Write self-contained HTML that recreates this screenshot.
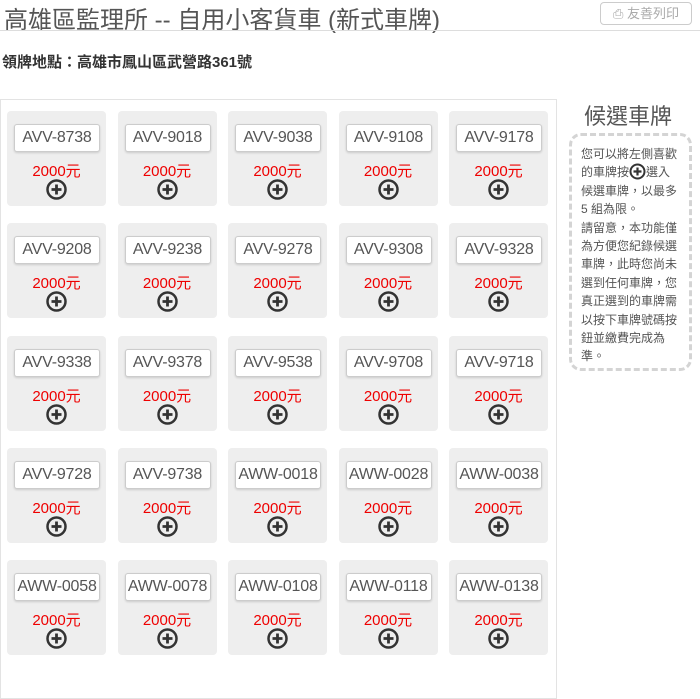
<!DOCTYPE html>
<html><head><meta charset="utf-8"><style>
*{margin:0;padding:0;box-sizing:border-box}
body{width:700px;height:654px;overflow:hidden;background:#fff;font-family:"Liberation Sans","Noto Sans CJK TC",sans-serif;position:relative}
h1{position:absolute;left:4px;top:0px;font-size:24px;font-weight:normal;color:#555;white-space:nowrap}
.hr{position:absolute;left:0;top:30px;width:700px;border-top:1px solid #ddd}
.btn{position:absolute;left:600px;top:2px;width:92px;height:23px;border:1px solid #ccc;border-radius:4px;font-size:13px;color:#aaa;text-align:center;line-height:21px}
.loc{position:absolute;left:2px;top:51px;font-size:15px;color:#333;font-weight:bold}
.box{position:absolute;left:0;top:99px;width:557px;height:600px;border:1px solid #e3e3e3}
.grid{position:absolute;left:7px;top:111px;display:grid;grid-template-columns:repeat(5,99px);column-gap:11.5px;grid-auto-rows:95px;row-gap:17.25px}
.c{background:#eee;border-radius:4px;position:relative}
.p{position:absolute;left:7px;top:13px;width:86px;height:28px;background:#fff;border:1px solid #ccc;border-radius:3px;box-shadow:0 1px 2px rgba(0,0,0,.15);font-size:16px;color:#555;text-align:center;line-height:26px;white-space:nowrap;letter-spacing:-.2px}
.pr{position:absolute;left:0;width:99px;top:49px;text-align:center;color:#e00;font-size:15px}
.pl{position:absolute;left:39px;top:68px}
.st{position:absolute;left:584px;top:99px;font-size:22px;color:#555}
.side{position:absolute;left:569px;top:133px;width:123px;height:238px;border:3px dashed #d4d4d4;border-radius:12px;padding:9px 8px 0 9px;font-size:12px;line-height:18.4px;color:#555}
</style></head><body>
<h1>高雄區監理所 -- 自用小客貨車 (新式車牌)</h1>
<div class="hr"></div>
<div class="btn">⎙ 友善列印</div>
<div class="loc">領牌地點：高雄市鳳山區武營路361號</div>
<div class="box"></div>
<div class="grid">
<div class="c"><div class="p">AVV-8738</div><div class="pr">2000元</div><svg class="pl" width="21" height="21"><circle cx="10.5" cy="10.5" r="9" fill="none" stroke="#333" stroke-width="2.5"/><path d="M10.5 5.5v10M5.5 10.5h10" stroke="#333" stroke-width="2.8"/></svg></div>
<div class="c"><div class="p">AVV-9018</div><div class="pr">2000元</div><svg class="pl" width="21" height="21"><circle cx="10.5" cy="10.5" r="9" fill="none" stroke="#333" stroke-width="2.5"/><path d="M10.5 5.5v10M5.5 10.5h10" stroke="#333" stroke-width="2.8"/></svg></div>
<div class="c"><div class="p">AVV-9038</div><div class="pr">2000元</div><svg class="pl" width="21" height="21"><circle cx="10.5" cy="10.5" r="9" fill="none" stroke="#333" stroke-width="2.5"/><path d="M10.5 5.5v10M5.5 10.5h10" stroke="#333" stroke-width="2.8"/></svg></div>
<div class="c"><div class="p">AVV-9108</div><div class="pr">2000元</div><svg class="pl" width="21" height="21"><circle cx="10.5" cy="10.5" r="9" fill="none" stroke="#333" stroke-width="2.5"/><path d="M10.5 5.5v10M5.5 10.5h10" stroke="#333" stroke-width="2.8"/></svg></div>
<div class="c"><div class="p">AVV-9178</div><div class="pr">2000元</div><svg class="pl" width="21" height="21"><circle cx="10.5" cy="10.5" r="9" fill="none" stroke="#333" stroke-width="2.5"/><path d="M10.5 5.5v10M5.5 10.5h10" stroke="#333" stroke-width="2.8"/></svg></div>
<div class="c"><div class="p">AVV-9208</div><div class="pr">2000元</div><svg class="pl" width="21" height="21"><circle cx="10.5" cy="10.5" r="9" fill="none" stroke="#333" stroke-width="2.5"/><path d="M10.5 5.5v10M5.5 10.5h10" stroke="#333" stroke-width="2.8"/></svg></div>
<div class="c"><div class="p">AVV-9238</div><div class="pr">2000元</div><svg class="pl" width="21" height="21"><circle cx="10.5" cy="10.5" r="9" fill="none" stroke="#333" stroke-width="2.5"/><path d="M10.5 5.5v10M5.5 10.5h10" stroke="#333" stroke-width="2.8"/></svg></div>
<div class="c"><div class="p">AVV-9278</div><div class="pr">2000元</div><svg class="pl" width="21" height="21"><circle cx="10.5" cy="10.5" r="9" fill="none" stroke="#333" stroke-width="2.5"/><path d="M10.5 5.5v10M5.5 10.5h10" stroke="#333" stroke-width="2.8"/></svg></div>
<div class="c"><div class="p">AVV-9308</div><div class="pr">2000元</div><svg class="pl" width="21" height="21"><circle cx="10.5" cy="10.5" r="9" fill="none" stroke="#333" stroke-width="2.5"/><path d="M10.5 5.5v10M5.5 10.5h10" stroke="#333" stroke-width="2.8"/></svg></div>
<div class="c"><div class="p">AVV-9328</div><div class="pr">2000元</div><svg class="pl" width="21" height="21"><circle cx="10.5" cy="10.5" r="9" fill="none" stroke="#333" stroke-width="2.5"/><path d="M10.5 5.5v10M5.5 10.5h10" stroke="#333" stroke-width="2.8"/></svg></div>
<div class="c"><div class="p">AVV-9338</div><div class="pr">2000元</div><svg class="pl" width="21" height="21"><circle cx="10.5" cy="10.5" r="9" fill="none" stroke="#333" stroke-width="2.5"/><path d="M10.5 5.5v10M5.5 10.5h10" stroke="#333" stroke-width="2.8"/></svg></div>
<div class="c"><div class="p">AVV-9378</div><div class="pr">2000元</div><svg class="pl" width="21" height="21"><circle cx="10.5" cy="10.5" r="9" fill="none" stroke="#333" stroke-width="2.5"/><path d="M10.5 5.5v10M5.5 10.5h10" stroke="#333" stroke-width="2.8"/></svg></div>
<div class="c"><div class="p">AVV-9538</div><div class="pr">2000元</div><svg class="pl" width="21" height="21"><circle cx="10.5" cy="10.5" r="9" fill="none" stroke="#333" stroke-width="2.5"/><path d="M10.5 5.5v10M5.5 10.5h10" stroke="#333" stroke-width="2.8"/></svg></div>
<div class="c"><div class="p">AVV-9708</div><div class="pr">2000元</div><svg class="pl" width="21" height="21"><circle cx="10.5" cy="10.5" r="9" fill="none" stroke="#333" stroke-width="2.5"/><path d="M10.5 5.5v10M5.5 10.5h10" stroke="#333" stroke-width="2.8"/></svg></div>
<div class="c"><div class="p">AVV-9718</div><div class="pr">2000元</div><svg class="pl" width="21" height="21"><circle cx="10.5" cy="10.5" r="9" fill="none" stroke="#333" stroke-width="2.5"/><path d="M10.5 5.5v10M5.5 10.5h10" stroke="#333" stroke-width="2.8"/></svg></div>
<div class="c"><div class="p">AVV-9728</div><div class="pr">2000元</div><svg class="pl" width="21" height="21"><circle cx="10.5" cy="10.5" r="9" fill="none" stroke="#333" stroke-width="2.5"/><path d="M10.5 5.5v10M5.5 10.5h10" stroke="#333" stroke-width="2.8"/></svg></div>
<div class="c"><div class="p">AVV-9738</div><div class="pr">2000元</div><svg class="pl" width="21" height="21"><circle cx="10.5" cy="10.5" r="9" fill="none" stroke="#333" stroke-width="2.5"/><path d="M10.5 5.5v10M5.5 10.5h10" stroke="#333" stroke-width="2.8"/></svg></div>
<div class="c"><div class="p">AWW-0018</div><div class="pr">2000元</div><svg class="pl" width="21" height="21"><circle cx="10.5" cy="10.5" r="9" fill="none" stroke="#333" stroke-width="2.5"/><path d="M10.5 5.5v10M5.5 10.5h10" stroke="#333" stroke-width="2.8"/></svg></div>
<div class="c"><div class="p">AWW-0028</div><div class="pr">2000元</div><svg class="pl" width="21" height="21"><circle cx="10.5" cy="10.5" r="9" fill="none" stroke="#333" stroke-width="2.5"/><path d="M10.5 5.5v10M5.5 10.5h10" stroke="#333" stroke-width="2.8"/></svg></div>
<div class="c"><div class="p">AWW-0038</div><div class="pr">2000元</div><svg class="pl" width="21" height="21"><circle cx="10.5" cy="10.5" r="9" fill="none" stroke="#333" stroke-width="2.5"/><path d="M10.5 5.5v10M5.5 10.5h10" stroke="#333" stroke-width="2.8"/></svg></div>
<div class="c"><div class="p">AWW-0058</div><div class="pr">2000元</div><svg class="pl" width="21" height="21"><circle cx="10.5" cy="10.5" r="9" fill="none" stroke="#333" stroke-width="2.5"/><path d="M10.5 5.5v10M5.5 10.5h10" stroke="#333" stroke-width="2.8"/></svg></div>
<div class="c"><div class="p">AWW-0078</div><div class="pr">2000元</div><svg class="pl" width="21" height="21"><circle cx="10.5" cy="10.5" r="9" fill="none" stroke="#333" stroke-width="2.5"/><path d="M10.5 5.5v10M5.5 10.5h10" stroke="#333" stroke-width="2.8"/></svg></div>
<div class="c"><div class="p">AWW-0108</div><div class="pr">2000元</div><svg class="pl" width="21" height="21"><circle cx="10.5" cy="10.5" r="9" fill="none" stroke="#333" stroke-width="2.5"/><path d="M10.5 5.5v10M5.5 10.5h10" stroke="#333" stroke-width="2.8"/></svg></div>
<div class="c"><div class="p">AWW-0118</div><div class="pr">2000元</div><svg class="pl" width="21" height="21"><circle cx="10.5" cy="10.5" r="9" fill="none" stroke="#333" stroke-width="2.5"/><path d="M10.5 5.5v10M5.5 10.5h10" stroke="#333" stroke-width="2.8"/></svg></div>
<div class="c"><div class="p">AWW-0138</div><div class="pr">2000元</div><svg class="pl" width="21" height="21"><circle cx="10.5" cy="10.5" r="9" fill="none" stroke="#333" stroke-width="2.5"/><path d="M10.5 5.5v10M5.5 10.5h10" stroke="#333" stroke-width="2.8"/></svg></div>
</div>
<div class="st">候選車牌</div>
<div class="side">您可以將左側喜歡的車牌按<svg width="17" height="17" style="vertical-align:-4px"><circle cx="8.5" cy="8.5" r="7" fill="none" stroke="#333" stroke-width="2"/><path d="M8.5 4.5v8M4.5 8.5h8" stroke="#333" stroke-width="2.2"/></svg>選入候選車牌，以最多5 組為限。<br>請留意，本功能僅為方便您紀錄候選車牌，此時您尚未選到任何車牌，您真正選到的車牌需以按下車牌號碼按鈕並繳費完成為準。</div>
</body></html>
